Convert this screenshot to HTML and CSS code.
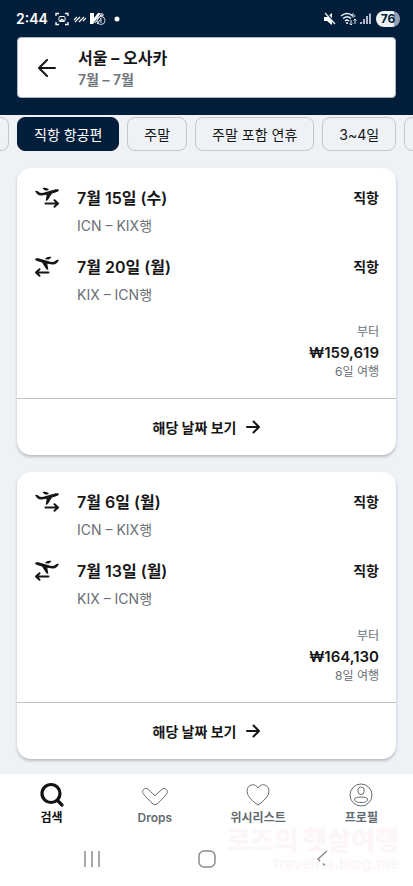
FILE: index.html
```
<!DOCTYPE html>
<html lang="ko">
<head>
<meta charset="utf-8">
<meta name="viewport" content="width=device-width, initial-scale=1">
<title>서울 – 오사카</title>
<link rel="stylesheet" href="styles.css">
</head>
<body>
<svg class="defs" aria-hidden="true">
  <symbol id="plane-out" viewBox="0 0 24 22">
    <path d="M.2 4.200C.8 3.500 2 3.700 2.800 4.300L5 5.800c2 .3 4-.3 6-.9l8-2.200c2-.5 4.200-.7 4.700.1.500 1-.8 1.900-2.500 2.400L17 6.500l-4 6.300c-.5.9-1.800 1.200-2.300.8l1-5.900-5.200.7C3.500 8.700 1.500 7 .2 4.200zM7.500 1.200c1.500-.8 3.800-.4 5.800.8.900.5.500 1.100-.4 1.300-1.300.3-2.300.4-3.200-.1z" fill="currentColor"/>
    <path d="M10.500 16.500h12M19.500 13.200l3.500 3.300-3.500 3.300" fill="none" stroke="currentColor" stroke-width="2" stroke-linecap="round" stroke-linejoin="round"/>
  </symbol>
  <symbol id="plane-back" viewBox="0 0 24 22">
    <path d="M.2 4.200C.8 3.500 2 3.700 2.800 4.300L5 5.800c2 .3 4-.3 6-.9l8-2.200c2-.5 4.200-.7 4.700.1.500 1-.8 1.900-2.500 2.400L17 6.500l-4 6.300c-.5.9-1.800 1.200-2.300.8l1-5.900-5.200.7C3.500 8.700 1.500 7 .2 4.200zM7.500 1.200c1.500-.8 3.800-.4 5.800.8.900.5.500 1.100-.4 1.300-1.300.3-2.300.4-3.200-.1z" fill="currentColor" transform="matrix(-1 0 0 1 24 0)"/>
    <path d="M13.500 16.500h-12M4.500 13.200 1 16.500l3.500 3.300" fill="none" stroke="currentColor" stroke-width="2" stroke-linecap="round" stroke-linejoin="round"/>
  </symbol>
  <symbol id="arrow" viewBox="0 0 14 14">
    <path d="M1 7h12M7.500 1.500 13 7l-5.500 5.500" fill="none" stroke="currentColor" stroke-width="2" stroke-linecap="round" stroke-linejoin="round"/>
  </symbol>
</svg>

<header class="top">
  <div class="status">
    <span class="clock">2:44</span>
    <svg width="66" height="14" viewBox="0 0 66 14" fill="none" stroke="#fff" aria-hidden="true">
      <path d="M1 4V1.500h3M10 1.500h3V4M1 10v2.500h3M10 12.500h3V10" stroke-width="1.300"/>
      <rect x="4" y="4.500" width="6" height="5" rx="1"/><path d="M5 9l2-1.500L9 9" stroke-width="1.500"/>
      <path d="M19 8l3-3M20 10l5-5M24 10l5-5M28 9l3-3" stroke-width="1.100"/>
      <path d="M35 1h4v5l4-5h3l-8 11h-3z" fill="#fff" stroke="none"/><path d="M40 11l6-8M42 12l3-4"/>
      <circle cx="46" cy="8.500" r="4" stroke-width=".8"/><path d="M46 6v5M45 7h1M47 1v4M45 3h4" stroke-width=".9"/>
      <circle cx="62" cy="7" r="2.500" fill="#fff" stroke="none"/>
    </svg>
    <span class="status-right">
      <svg width="48" height="14" viewBox="0 0 48 14" fill="none" stroke="#e8edf3" aria-hidden="true">
        <path d="M0 5h3l5-4v12L3 9H0z" fill="#fff" stroke="none"/><path d="M2 1l10 11" stroke="#031e3b" stroke-width="2"/><path d="M1 1l10 11" stroke-width="1.300"/>
        <path d="M17 4q6-5 12 0M19 6.500q4.500-3.500 8 0M21 9q2-2 4 0" stroke-width="1.400"/><circle cx="23" cy="11" r="1" fill="#fff" stroke="none"/>
        <path d="M29.500 1c-2 2-2 4 0 4s2-2 0-2M27 8v5M25.500 11.500 27 13l1.500-1.500M31 12V7M29.500 8.500 31 7l1.500 1.500" stroke-width="1"/>
        <path d="M37 12v-2M40 12V7M43 12V4M46 12V1.500" stroke-width="1.500"/>
      </svg>
      <span class="battery">76</span>
    </span>
  </div>
  <div class="route">
    <button class="back" aria-label="뒤로">
      <svg width="18" height="18" viewBox="0 0 18 18" fill="none" stroke="currentColor" stroke-width="2" stroke-linecap="round" stroke-linejoin="round"><path d="M17 9H1M9 1 1 9l8 8"/></svg>
    </button>
    <div>
      <h1>서울 – 오사카</h1>
      <p>7월 – 7월</p>
    </div>
  </div>
</header>

<nav class="filters" aria-label="필터">
  <button class="chip edge" aria-label="이전 필터"></button>
  <button class="chip active">직항 항공편</button>
  <button class="chip">주말</button>
  <button class="chip">주말 포함 연휴</button>
  <button class="chip">3~4일</button>
  <button class="chip edge" aria-label="다음 필터"></button>
</nav>

<main class="results">
  <article class="card">
    <div class="trip">
      <div class="leg">
        <svg class="plane"><use href="#plane-out"/></svg>
        <div class="when"><h2>7월 15일 (수)</h2><p>ICN – KIX행</p></div>
        <strong>직항</strong>
      </div>
      <div class="leg">
        <svg class="plane"><use href="#plane-back"/></svg>
        <div class="when"><h2>7월 20일 (월)</h2><p>KIX – ICN행</p></div>
        <strong>직항</strong>
      </div>
      <div class="price"><span>부터</span><b>₩159,619</b><span>6일 여행</span></div>
    </div>
    <a class="more" href="#">해당 날짜 보기 <svg class="arrow"><use href="#arrow"/></svg></a>
  </article>
  <article class="card">
    <div class="trip">
      <div class="leg">
        <svg class="plane"><use href="#plane-out"/></svg>
        <div class="when"><h2>7월 6일 (월)</h2><p>ICN – KIX행</p></div>
        <strong>직항</strong>
      </div>
      <div class="leg">
        <svg class="plane"><use href="#plane-back"/></svg>
        <div class="when"><h2>7월 13일 (월)</h2><p>KIX – ICN행</p></div>
        <strong>직항</strong>
      </div>
      <div class="price"><span>부터</span><b>₩164,130</b><span>8일 여행</span></div>
    </div>
    <a class="more" href="#">해당 날짜 보기 <svg class="arrow"><use href="#arrow"/></svg></a>
  </article>
</main>

<footer class="bottom">
  <nav class="tabs" aria-label="메뉴">
    <a class="tab current" href="#">
      <svg viewBox="0 0 26 26" fill="none" stroke="currentColor" stroke-width="3.200" stroke-linecap="round"><circle cx="12" cy="11.500" r="9"/><path d="m18.500 18.500 4.500 4.500"/></svg>
      검색
    </a>
    <a class="tab" href="#">
      <svg viewBox="0 0 26 26" fill="none" stroke="currentColor" stroke-linejoin="round"><path d="M1.200 11.600C-.8 8.500 3 4.800 6 7.200l7 6.600 7-6.600c3-2.400 6.800 1.300 4.800 4.400-2.500 3.500-6 7-9.800 10.400-1.300 1-2.700 1-4 0C7.200 18.600 3.700 15.100 1.200 11.600z"/></svg>
      Drops
    </a>
    <a class="tab" href="#">
      <svg viewBox="0 0 26 26" fill="none" stroke="currentColor" stroke-linejoin="round"><path d="M13 6C10.500 1.500 5 2 3 5.500c-2 3.500-.5 7.500 2 10.500 2.500 3 5.500 5.500 8 7 2.500-1.500 5.500-4 8-7 2.500-3 4-7 2-10.500C21 2 15.500 1.500 13 6z"/></svg>
      위시리스트
    </a>
    <a class="tab" href="#">
      <svg viewBox="0 0 26 26" fill="none" stroke="currentColor"><circle cx="13" cy="13" r="11"/><rect x="10" y="5" width="6" height="7.500" rx="2.800"/><path d="M6.500 17c0-2.600 13-2.600 13 0s-2.500 3.500-6.500 3.500-6.500-.9-6.500-3.500z"/></svg>
      프로필
    </a>
  </nav>
  <div class="system">
    <button aria-label="최근 앱"><svg width="18" height="18" viewBox="0 0 18 18" fill="none" stroke="#8b8b8b" stroke-width="1.500"><path d="M2 1v16M9 1v16M16 1v16"/></svg></button>
    <button aria-label="홈"><svg width="18" height="18" viewBox="0 0 18 18" fill="none" stroke="#8b8b8b" stroke-width="1.500"><rect x="1" y="1" width="16" height="16" rx="5"/></svg></button>
    <button aria-label="이전"><svg width="18" height="18" viewBox="0 0 18 18" fill="none" stroke="#8b8b8b" stroke-width="1.500"><path d="M14 1 5 9l2 2M10 13.500l2 2"/></svg></button>
  </div>
  <p class="watermark"><b>로즈의 햇살여행</b><span>travelria.blog.me</span></p>
</footer>
</body>
</html>
```
FILE: styles.css
```
* { box-sizing: border-box; margin: 0; padding: 0; }

body {
  min-height: 100vh;
  display: flex;
  flex-direction: column;
  background: #eef2f7;
  color: #161616;
  font-family: Inter, "Noto Sans CJK KR", sans-serif;
  overflow-x: hidden;
}

button { border: 0; background: none; color: inherit; font: inherit; }
a { color: inherit; text-decoration: none; }
svg { display: block; flex: none; }
.defs { position: absolute; width: 0; height: 0; }

.top { background: #031e3b; padding: 0 17px 17px; }
.status { display: flex; align-items: center; gap: 7px; height: 37px; margin: 0 -4px 0 -1px; color: #fff; }
.clock { font: 600 14px/20px Inter, sans-serif; }
.status-right { display: flex; align-items: center; gap: 4px; margin-left: auto; }
.battery {
  width: 24px;
  border-radius: 8px;
  background: linear-gradient(90deg, #eef2f7 76%, #93a0b1 76%);
  color: #031e3b;
  font: 700 12px/16px Inter, sans-serif;
  text-align: center;
}
.route { display: flex; align-items: center; height: 61px; background: #fff; border: 1px solid #a9b5c2; border-radius: 4px; }
.back { width: 60px; padding-left: 20px; }
h1 { font-size: 16px; line-height: 24px; font-weight: 700; }
.route p { font-size: 14px; line-height: 20px; font-weight: 600; color: #6d747b; }

.filters { display: flex; gap: 8px; padding-top: 2px; overflow: hidden; }
.chip { flex: none; height: 34px; padding: 0 16px; border: 1px solid #c3c7cd; border-radius: 8px; font-size: 14px; white-space: nowrap; }
.chip.active { background: #031e3b; border-color: #031e3b; color: #fff; }
.chip.edge { width: 60px; }
.chip.edge:first-child { margin-left: -51px; }

.results { display: grid; gap: 17px; padding: 17px; }
.card { background: #fff; border-radius: 14px; box-shadow: 0 2px 3px rgb(20 30 45 / 25%); }
.trip { display: grid; padding: 16px 17px 18px; }
.leg { display: flex; height: 69px; line-height: 28px; }
.plane { width: 24px; height: 22px; margin: 3px 18px 0 1px; }
.when { flex: 1; }
h2 { font-size: 16px; line-height: 28px; font-weight: 600; }
.when p { font-size: 14px; color: #6a7076; }
.leg strong { font-size: 14px; font-weight: 700; }
.price { display: grid; justify-items: end; padding-top: 2px; font-size: 12px; line-height: 16px; color: #6a7076; }
.price b { margin-top: 2px; font-size: 15px; line-height: 22px; font-weight: 600; color: #161616; }
.more { display: flex; align-items: center; justify-content: center; gap: 10px; height: 57px; border-top: 1px solid #bfc3c8; font-size: 14px; font-weight: 700; }
.arrow { width: 14px; height: 14px; }

.bottom { position: relative; flex: 1; margin-top: -2px; background: #fff; }
.tabs { display: grid; grid-template-columns: repeat(4, 1fr); padding-top: 8px; }
.tab { display: grid; justify-items: center; font-size: 12px; line-height: 20px; font-weight: 600; color: #626a71; }
.tab svg { width: 26px; height: 26px; }
.tab.current { color: #111; font-weight: 700; }
.system { position: relative; z-index: 1; display: flex; justify-content: center; gap: 97px; padding-top: 22px; }
.watermark { position: absolute; right: 14px; top: 55px; display: grid; gap: 2px; justify-items: end; color: #fdf6f6; pointer-events: none; }
.watermark b { font-size: 26px; line-height: 24px; font-weight: 900; }
.watermark span { font-size: 15px; line-height: 18px; font-weight: 700; }
```
